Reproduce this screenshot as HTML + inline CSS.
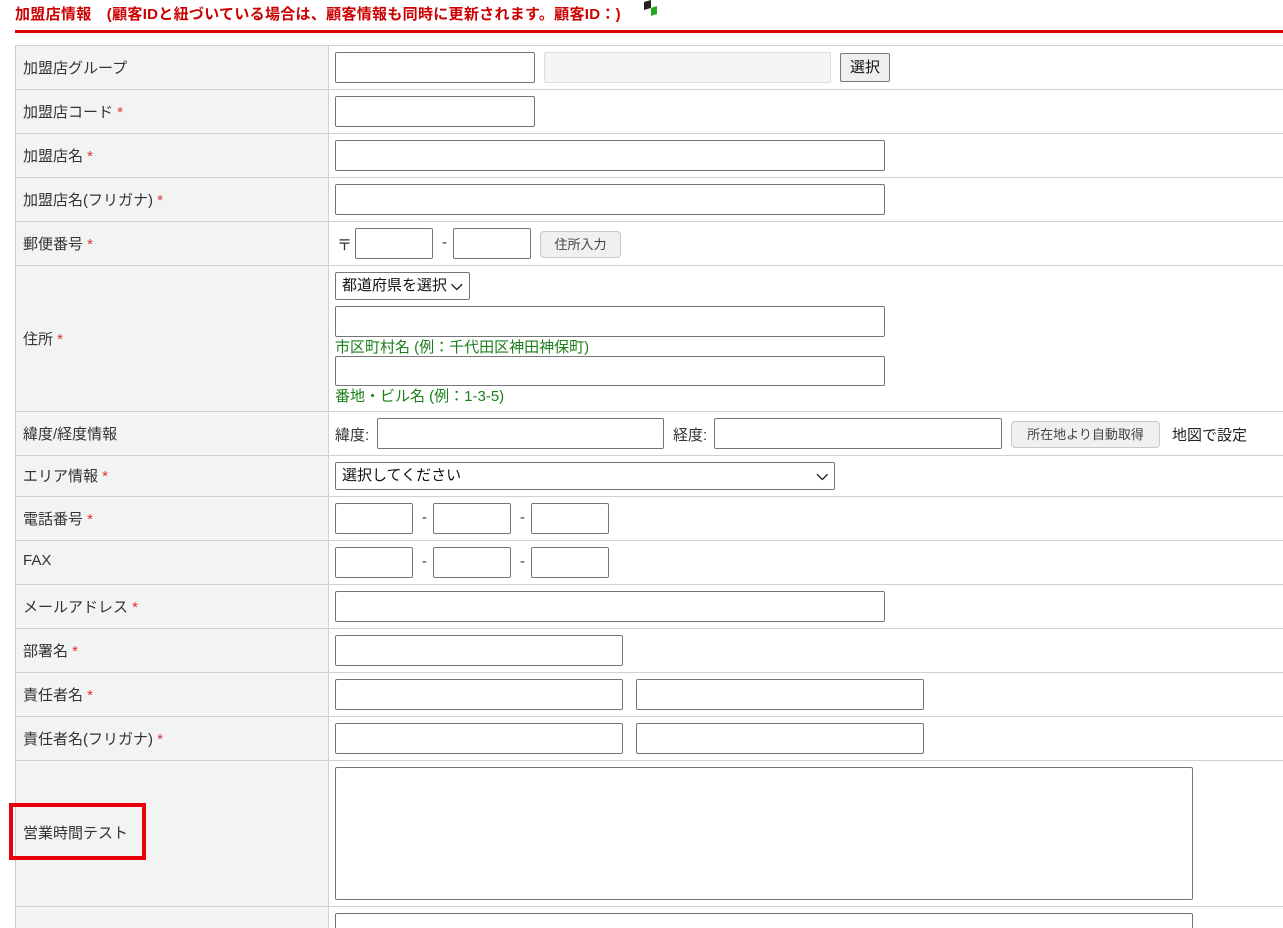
<!DOCTYPE html>
<html><head><meta charset="utf-8"><style>
*{box-sizing:border-box;margin:0;padding:0}
html,body{width:1283px;height:928px;overflow:hidden}
body{background:#fff;font-family:"Liberation Sans","Noto Sans CJK JP",sans-serif;font-size:15px;color:#333;position:relative}
.a{position:absolute}
.t{color:#c00;font-weight:bold;font-size:15px;left:15px;top:3px;letter-spacing:0.3px}
.rl{left:15px;right:0;height:3px;background:#d00;top:30px}
.lab{left:15px;width:313px;background:#f2f3f3;border-left:1px solid #ccc}
.hl{left:15px;right:0;height:1px;background:#d0d0d0}
.vl{left:328px;width:1px;background:#d0d0d0;top:45px;bottom:0}
.tx{font-size:15px;color:#333}
.req{color:#e03030}
.in{border:1px solid #767676;border-radius:2px;background:#fff;height:31px}
.btn{border:1px solid #c8c8c8;border-radius:4px;background:#f0f0f0;font-size:13px;color:#444;text-align:center;line-height:25px;height:27px}
.g{color:#1a7f1a;font-size:15px}
.sel{border:1px solid #767676;border-radius:2px;background:#fff;height:28px;padding-left:6px;line-height:26px;color:#111;font-size:15px}
</style></head><body>
<div class="a t">加盟店情報　(顧客IDと紐づいている場合は、顧客情報も同時に更新されます。顧客ID：)</div>
<svg class="a" style="left:641px;top:0" width="18" height="18"><polygon points="3,2 10,0 10,8 3,10" fill="#222"/><polygon points="10,8 16,6 16,14 10,16" fill="#2a2"/></svg>
<div class="a rl"></div>
<div class="a lab" style="top:45px;height:883px"></div>
<div class="a vl"></div>
<div class="a hl" style="top:45px"></div><div class="a hl" style="top:89px"></div><div class="a hl" style="top:133px"></div><div class="a hl" style="top:177px"></div><div class="a hl" style="top:221px"></div><div class="a hl" style="top:265px"></div><div class="a hl" style="top:411px"></div><div class="a hl" style="top:455px"></div><div class="a hl" style="top:496px"></div><div class="a hl" style="top:540px"></div><div class="a hl" style="top:584px"></div><div class="a hl" style="top:628px"></div><div class="a hl" style="top:672px"></div><div class="a hl" style="top:716px"></div><div class="a hl" style="top:760px"></div><div class="a hl" style="top:906px"></div>

<div class="a tx" style="left:23px;top:57px">加盟店グループ</div>
<div class="a tx" style="left:23px;top:101px">加盟店コード <span class="req">*</span></div>
<div class="a tx" style="left:23px;top:145px">加盟店名 <span class="req">*</span></div>
<div class="a tx" style="left:23px;top:189px">加盟店名(フリガナ) <span class="req">*</span></div>
<div class="a tx" style="left:23px;top:233px">郵便番号 <span class="req">*</span></div>
<div class="a tx" style="left:23px;top:328px">住所 <span class="req">*</span></div>
<div class="a tx" style="left:23px;top:423px">緯度/経度情報</div>
<div class="a tx" style="left:23px;top:465px">エリア情報 <span class="req">*</span></div>
<div class="a tx" style="left:23px;top:508px">電話番号 <span class="req">*</span></div>
<div class="a tx" style="left:23px;top:552px">FAX</div>
<div class="a tx" style="left:23px;top:596px">メールアドレス <span class="req">*</span></div>
<div class="a tx" style="left:23px;top:640px">部署名 <span class="req">*</span></div>
<div class="a tx" style="left:23px;top:684px">責任者名 <span class="req">*</span></div>
<div class="a tx" style="left:23px;top:728px">責任者名(フリガナ) <span class="req">*</span></div>
<div class="a tx" style="left:23px;top:822px">営業時間テスト</div>
<div class="a" style="left:9px;top:803px;width:137px;height:57px;border:4px solid #e8000a"></div>

<div class="a in" style="left:335px;top:52px;width:200px"></div>
<div class="a" style="left:544px;top:52px;width:287px;height:31px;border:1px solid #ddd;background:#f5f5f5;border-radius:2px"></div>
<div class="a" style="left:840px;top:53px;width:50px;height:29px;border:1px solid #777;border-radius:2px;background:#efefef;text-align:center;line-height:27px;color:#111">選択</div>
<div class="a in" style="left:335px;top:96px;width:200px"></div>
<div class="a in" style="left:335px;top:140px;width:550px"></div>
<div class="a in" style="left:335px;top:184px;width:550px"></div>
<div class="a tx" style="left:337px;top:234px">〒</div>
<div class="a in" style="left:355px;top:228px;width:78px"></div>
<div class="a tx" style="left:442px;top:234px">-</div>
<div class="a in" style="left:453px;top:228px;width:78px"></div>
<div class="a btn" style="left:540px;top:231px;width:81px">住所入力</div>
<div class="a sel" style="left:335px;top:272px;width:135px">都道府県を選択 <b>⌵</b></div>
<div class="a in" style="left:335px;top:306px;width:550px;height:31px"></div>
<div class="a g" style="left:335px;top:336px">市区町村名 (例：千代田区神田神保町)</div>
<div class="a in" style="left:335px;top:356px;width:550px;height:30px"></div>
<div class="a g" style="left:335px;top:385px">番地・ビル名 (例：1-3-5)</div>
<div class="a tx" style="left:335px;top:424px">緯度:</div>
<div class="a in" style="left:377px;top:418px;width:287px"></div>
<div class="a tx" style="left:673px;top:424px">経度:</div>
<div class="a in" style="left:714px;top:418px;width:288px"></div>
<div class="a btn" style="left:1011px;top:421px;width:149px">所在地より自動取得</div>
<div class="a tx" style="left:1172px;top:424px;color:#222">地図で設定</div>
<div class="a sel" style="left:335px;top:462px;width:500px">選択してください<b style="position:absolute;right:6px">⌵</b></div>
<div class="a in" style="left:335px;top:503px;width:78px"></div><div class="a tx" style="left:422px;top:509px">-</div>
<div class="a in" style="left:433px;top:503px;width:78px"></div><div class="a tx" style="left:520px;top:509px">-</div>
<div class="a in" style="left:531px;top:503px;width:78px"></div>
<div class="a in" style="left:335px;top:547px;width:78px"></div><div class="a tx" style="left:422px;top:553px">-</div>
<div class="a in" style="left:433px;top:547px;width:78px"></div><div class="a tx" style="left:520px;top:553px">-</div>
<div class="a in" style="left:531px;top:547px;width:78px"></div>
<div class="a in" style="left:335px;top:591px;width:550px"></div>
<div class="a in" style="left:335px;top:635px;width:288px"></div>
<div class="a in" style="left:335px;top:679px;width:288px"></div>
<div class="a in" style="left:636px;top:679px;width:288px"></div>
<div class="a in" style="left:335px;top:723px;width:288px"></div>
<div class="a in" style="left:636px;top:723px;width:288px"></div>
<div class="a in" style="left:335px;top:767px;width:858px;height:133px"></div>
<div class="a in" style="left:335px;top:913px;width:858px;height:40px"></div>
</body></html>
